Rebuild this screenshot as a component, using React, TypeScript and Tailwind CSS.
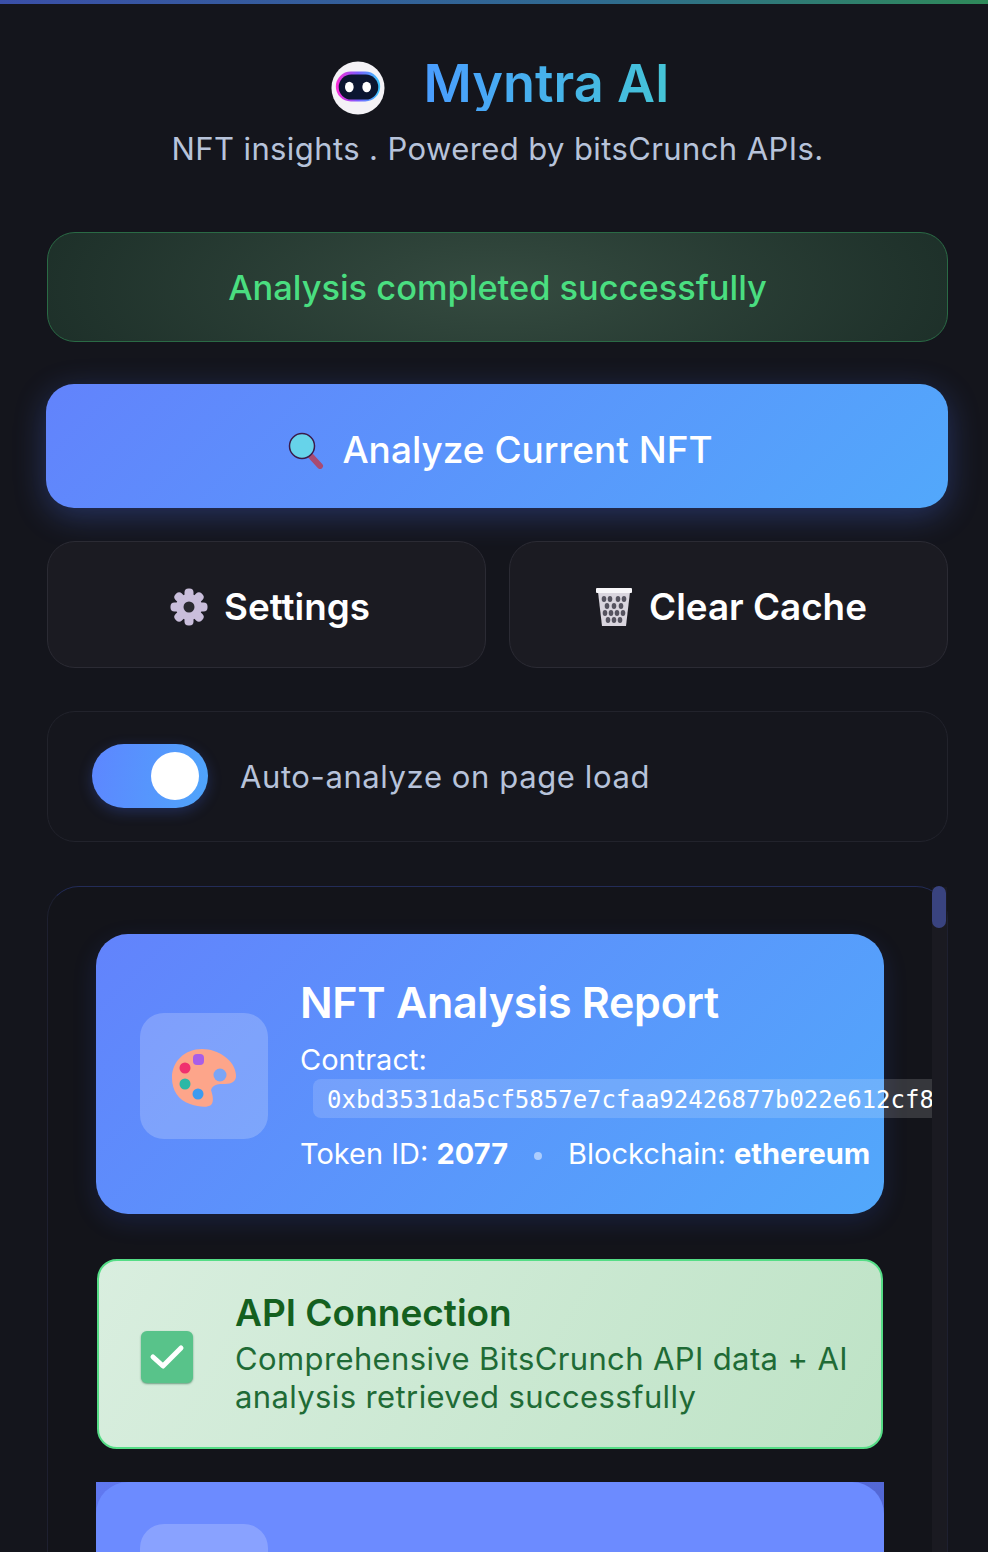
function Robot() {
  return (
    <svg width="54" height="56" viewBox="0 0 56 56" className="mt-[8px]">
      <defs>
        <linearGradient id="rim" x1="0" y1="0" x2="1" y2="0">
          <stop offset="0" stopColor="#ff2bd6" />
          <stop offset="0.5" stopColor="#7a5cff" />
          <stop offset="1" stopColor="#38c8ff" />
        </linearGradient>
      </defs>
      <circle cx="28" cy="28" r="27.500" fill="#f4f2f6" />
      <rect x="5" y="11" width="46" height="31" rx="15.500" fill="url(#rim)" />
      <rect x="8" y="14" width="41" height="26" rx="13" fill="#0b1630" />
      <ellipse cx="19" cy="27" rx="4.500" ry="5.500" fill="#fff" />
      <ellipse cx="37" cy="27" rx="4.500" ry="5.500" fill="#fff" />
    </svg>
  );
}

function Magnifier() {
  return (
    <svg width="38" height="38" viewBox="0 0 38 38">
      <path d="M22 23 L33 35" stroke="#a84a72" strokeWidth="6" strokeLinecap="round" />
      <circle cx="15" cy="15" r="12.500" fill="#66d3ea" stroke="#3a1a4a" strokeWidth="1.500" />
    </svg>
  );
}

function Gear() {
  return (
    <svg width="38" height="38" viewBox="0 0 38 38">
      <g>
        <circle cx="19" cy="19" r="13" fill="#c9bedb" />
        {[0, 45, 90, 135, 180, 225, 270, 315].map((a) => (
          <rect key={a} x="14.500" y="0.500" width="9" height="11" rx="4" fill="#c9bedb" transform={`rotate(${a} 19 19)`} />
        ))}
      </g>
      <circle cx="19" cy="19" r="5.500" fill="#2a2a30" />
    </svg>
  );
}

function Trash() {
  const dots = [
    [9, 12], [15, 12], [23, 12], [29, 12],
    [12, 19], [19, 19], [26, 19],
    [10, 26], [16, 26], [22, 26], [28, 26],
    [13, 33], [19, 33], [25, 33],
  ];
  return (
    <svg width="38" height="40" viewBox="0 0 38 40">
      <path d="M3 5 H35 L31 39 H7 Z" fill="#d9d5de" />
      <rect x="1" y="1" width="36" height="5" rx="1" fill="#f7f6f9" />
      {dots.map(([x, y]) => (
        <ellipse key={`${x}-${y}`} cx={x} cy={y} rx="2.300" ry="3" fill="#55535f" />
      ))}
    </svg>
  );
}

function Palette() {
  return (
    <svg width="68" height="60" viewBox="0 0 68 60">
      <path
        d="M32 1 C48 1 65 12 66 27 C66.500 33 62 36 55 36 C49 36 43 36 41 42 C43 48 44 54 41 57 C37 60 29 59 20 56 C8 52 2 42 2 30 C2 13 15 1 32 1 Z"
        fill="#fda58a"
      />
      <rect x="23" y="6" width="11" height="11" rx="4" fill="#a85ee8" />
      <circle cx="15" cy="20" r="5.500" fill="#f0306e" />
      <circle cx="15" cy="36" r="5.500" fill="#2bb8a6" />
      <circle cx="28" cy="46" r="5.500" fill="#3d9bf0" />
      <circle cx="50" cy="27" r="6.500" fill="#7aa5f6" />
    </svg>
  );
}

function Check() {
  return (
    <svg viewBox="0 0 36 28" fill="none" className="w-[38px] h-[28px]">
      <path d="M4 14 L14 23 L32 5" stroke="#fff" strokeWidth="5" strokeLinecap="round" strokeLinejoin="round" />
    </svg>
  );
}

export default function App() {
  return (
    <div className="h-[1552px] overflow-hidden bg-[#14151c] font-['Inter',sans-serif] flex flex-col">
      <div className="h-1 shrink-0 bg-[linear-gradient(90deg,#3a4fa8,#2f6a90_60%,#2f8a5a)]" />

      <div className="flex flex-col flex-1 min-h-0 pl-[47px] pr-[40px]">
        <header className="flex flex-col items-center pt-[52px]">
          <div className="flex items-center gap-[39px] h-[56px] pl-[5px]">
            <Robot />
            <h1 className="-mt-[2px] text-[52.300px] leading-[56px] font-semibold bg-linear-to-r from-[#4a9dff] to-[#45c4d6] bg-clip-text text-transparent">
              Myntra AI
            </h1>
          </div>
          <p className="mt-[18px] text-[31px] leading-[38px] text-[#b7c3da] tracking-[0.4px] whitespace-nowrap">
            NFT insights . Powered by bitsCrunch APIs.
          </p>
        </header>

        <div className="mt-[64px] h-[110px] shrink-0 rounded-[28px] border border-[#2a6a45] bg-[radial-gradient(ellipse_60%_170%_at_center,#354b40,#1a2c26)] pt-[2px] flex items-center justify-center">
          <span className="text-[34.400px] font-medium text-[#4ade80]">Analysis completed successfully</span>
        </div>

        <button className="mt-[42px] -ml-px h-[124px] shrink-0 rounded-[28px] bg-[linear-gradient(135deg,#6283fc,#52a8fb)] shadow-[0_8px_32px_rgba(80,120,255,0.3)] pt-[7px] pl-[6px] flex items-center justify-center gap-[17px]">
          <Magnifier />
          <span className="text-[37px] font-medium text-white">Analyze Current NFT</span>
        </button>

        <div className="mt-[33px] h-[127px] shrink-0 grid grid-cols-2 gap-[23px]">
          <button className="rounded-[28px] bg-[#1b1b22] border border-[#2b2b34] pt-[5px] pl-[7px] flex items-center justify-center gap-[16px]">
            <Gear />
            <span className="text-[36.800px] font-semibold text-white">Settings</span>
          </button>
          <button className="rounded-[28px] bg-[#1b1b22] border border-[#2b2b34] pt-[5px] pl-[5px] flex items-center justify-center gap-[16px]">
            <Trash />
            <span className="text-[36.800px] font-semibold text-white">Clear Cache</span>
          </button>
        </div>

        <div className="mt-[43px] h-[131px] shrink-0 rounded-[28px] border border-[#22232c] bg-[#15161d] flex items-center pl-[44px] gap-[32px]">
          <div className="w-[116px] h-[64px] -mt-[2px] rounded-full bg-[linear-gradient(100deg,#5d86ff,#4fa5fb)] flex items-center justify-end pr-[9px] shadow-[0_4px_14px_rgba(70,110,255,0.25)]">
            <div className="w-[48px] h-[48px] rounded-full bg-white" />
          </div>
          <span className="pt-[2px] text-[31px] text-[#b7c3da] tracking-[0.6px]">Auto-analyze on page load</span>
        </div>

        <div className="mt-[44px] flex-1 min-h-0 flex rounded-t-[32px] border border-b-0 border-[#1e2030] border-t-[#232c58] bg-[#13141a]">
          <div className="flex-1 min-w-0 overflow-hidden flex flex-col pt-[47px] pl-[48px] pr-[48px] rounded-tl-[32px]">
            <section className="h-[280px] shrink-0 rounded-[32px] bg-[linear-gradient(135deg,#6283fc,#52a8fb)] shadow-[0_8px_24px_rgba(60,100,255,0.15)] flex items-center pl-[44px] gap-[33px]">
              <div className="w-[128px] h-[126px] shrink-0 rounded-[24px] bg-white/20 pt-[4px] flex items-center justify-center mt-[4px]">
                <Palette />
              </div>
              <div className="min-w-0 flex-1 -ml-px -mr-[48px] pt-[2px] flex flex-col text-white">
                <h2 className="-mt-[2px] text-[43px] leading-[52px] font-semibold tracking-[-0.3px] whitespace-nowrap">NFT Analysis Report</h2>
                <div className="mt-[14px] text-[29px] leading-[36px]">Contract:</div>
                <code className="ml-[13px] mt-[1px] h-[39px] pl-[14px] rounded-l-[8px] bg-white/15 font-['DejaVu_Sans_Mono',monospace] text-[24px] leading-[42px] overflow-hidden whitespace-nowrap">
                  0xbd3531da5cf5857e7cfaa92426877b022e612cf8
                </code>
                <div className="mt-[18px] text-[29px] leading-[36px] flex items-center whitespace-nowrap">
                  <span>
                    Token ID: <b className="font-bold">2077</b>
                  </span>
                  <span className="mx-[26px] mt-[3px] w-[8px] h-[8px] rounded-full bg-white/50" />
                  <span>
                    Blockchain: <b className="font-bold">ethereum</b>
                  </span>
                </div>
              </div>
            </section>

            <section className="mt-[45px] h-[190px] shrink-0 mx-px rounded-[20px] border-2 border-[#55dd86] bg-[linear-gradient(120deg,#d9eedf,#bee3c6)] flex items-center pl-[42px] gap-[42px]">
              <div className="w-[52px] h-[52px] mt-[6px] shrink-0 rounded-[6px] bg-[#58c38a] shadow-[0_1px_2px_rgba(0,80,40,0.5)] flex items-center justify-center">
                <Check />
              </div>
              <div className="min-w-0 pb-px">
                <h3 className="text-[37px] leading-[44px] mb-[5px] font-semibold text-[#14601f]">API Connection</h3>
                <p className="text-[31px] leading-[38px] text-[#1f6b36] tracking-[0.38px]">
                  Comprehensive BitsCrunch API data + AI analysis retrieved successfully
                </p>
              </div>
            </section>

            <section className="mt-[33px] h-[280px] shrink-0 bg-[linear-gradient(90deg,#6078f0,#5368d6)]">
              <div className="h-full rounded-t-[32px] bg-[#6c8bff] pl-[44px] pt-[42px]">
                <div className="w-[128px] h-[126px] rounded-[24px] bg-white/20" />
              </div>
            </section>
          </div>
          <div className="w-[15px] shrink-0 bg-[#1a1a21]">
            <div className="h-[42px] -mt-px w-[14px] rounded-full bg-[#39437f]" />
          </div>
        </div>
      </div>
    </div>
  );
}
